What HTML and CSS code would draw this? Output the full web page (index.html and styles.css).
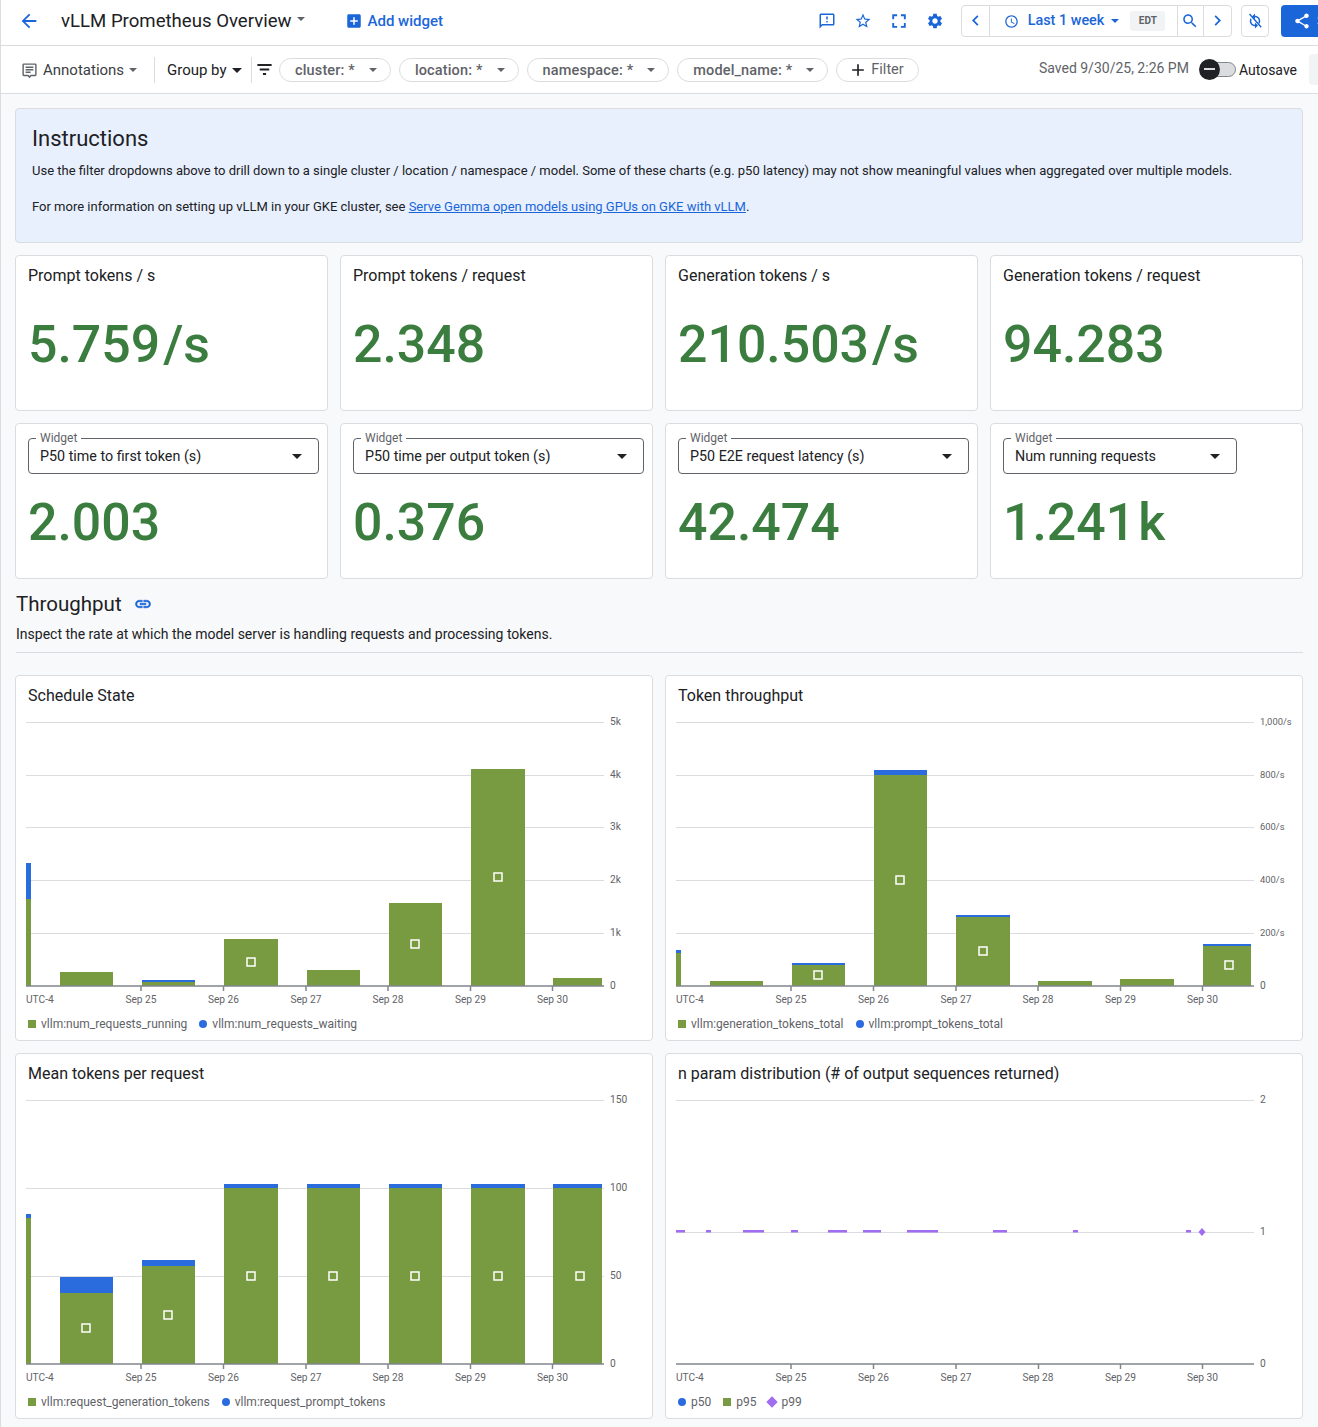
FILE: index.html
```html
<!DOCTYPE html>
<html lang="en">
<head>
  <meta charset="UTF-8" />
  <title>vLLM Prometheus Overview</title>
  <link rel="stylesheet" href="styles.css">
</head>
<body>
  <header class="topbar">
    <svg class="icon back" viewBox="0 0 24 24"><path d="M20 11H7.83l5.59-5.59L12 4l-8 8 8 8 1.41-1.41L7.83 13H20v-2z"/></svg>
    <h1 class="page-title">vLLM Prometheus Overview</h1>
    <span class="caret caret-small title-caret"></span>
    <a class="add-widget">
      <svg class="icon" viewBox="0 0 24 24"><path d="M19 3H5c-1.1 0-2 .9-2 2v14c0 1.100.9 2 2 2h14c1.100 0 2-.9 2-2V5c0-1.100-.9-2-2-2zm-2 10h-4v4h-2v-4H7v-2h4V7h2v4h4v2z"/></svg>
      Add widget
    </a>
    <div class="top-icons">
      <svg class="icon" viewBox="0 0 24 24"><path d="M20 2H4c-1.100 0-2 .9-2 2v18l4-4h14c1.100 0 2-.9 2-2V4c0-1.100-.9-2-2-2zm0 14H5.170L4 17.170V4h16v12zM11 12h2v2h-2zm0-6h2v4h-2z"/></svg>
      <svg class="icon" viewBox="0 0 24 24"><path d="M22 9.240l-7.190-.62L12 2 9.190 8.630 2 9.240l5.460 4.730L5.820 21 12 17.270 18.180 21l-1.630-7.030L22 9.240zM12 15.400l-3.760 2.270 1-4.280-3.320-2.880 4.380-.38L12 6.100l1.710 4.040 4.380.38-3.320 2.880 1 4.280L12 15.400z"/></svg>
      <svg class="icon" viewBox="0 0 24 24"><path d="M5.500 14.500H3V21h6.500v-2.500h-4zM3 9.500h2.500v-4h4V3H3zm15.500 9h-4V21H21v-6.500h-2.500zM14.500 3v2.500h4v4H21V3z"/></svg>
      <svg class="icon" viewBox="0 0 24 24"><path d="M19.140 12.940c.04-.3.06-.61.06-.94 0-.32-.02-.64-.07-.94l2.030-1.580c.18-.14.23-.41.12-.61l-1.920-3.320c-.12-.22-.37-.29-.59-.22l-2.390.96c-.5-.38-1.030-.7-1.620-.94l-.36-2.540c-.04-.24-.24-.41-.48-.41h-3.840c-.24 0-.43.17-.47.41l-.36 2.540c-.59.24-1.130.57-1.620.94l-2.390-.96c-.22-.08-.47 0-.59.22L2.740 8.870c-.12.21-.08.47.12.61l2.030 1.580c-.05.3-.09.63-.09.94s.02.64.07.94l-2.030 1.580c-.18.14-.23.41-.12.61l1.920 3.320c.12.22.37.29.59.22l2.390-.96c.5.38 1.030.7 1.620.94l.36 2.540c.05.24.24.41.48.41h3.840c.24 0 .44-.17.47-.41l.36-2.540c.59-.24 1.130-.56 1.620-.94l2.390.96c.22.08.47 0 .59-.22l1.920-3.320c.12-.22.07-.47-.12-.61l-2.010-1.580zM12 15.600c-1.980 0-3.600-1.620-3.600-3.600s1.620-3.600 3.600-3.600 3.600 1.620 3.600 3.600-1.620 3.600-3.600 3.600z"/></svg>
    </div>
    <div class="time-group">
      <button class="time-btn nav"><svg class="icon" viewBox="0 0 24 24"><path d="M15.410 7.410L14 6l-6 6 6 6 1.410-1.410L10.830 12z"/></svg></button>
      <div class="time-range">
        <svg class="icon clock" viewBox="0 0 24 24"><path d="M11.990 2C6.470 2 2 6.480 2 12s4.470 10 9.990 10C17.520 22 22 17.520 22 12S17.520 2 11.990 2zM12 20c-4.420 0-8-3.580-8-8s3.580-8 8-8 8 3.580 8 8-3.580 8-8 8zm.5-13H11v6l5.250 3.150.75-1.230-4.500-2.670z"/></svg>
        <span>Last 1 week</span>
        <span class="caret caret-blue"></span>
        <span class="tz">EDT</span>
      </div>
      <button class="time-btn zoom-btn"><svg class="icon" viewBox="0 0 24 24"><path d="M15.500 14h-.79l-.28-.27C15.410 12.590 16 11.110 16 9.500 16 5.910 13.090 3 9.500 3S3 5.910 3 9.500 5.910 16 9.500 16c1.610 0 3.090-.59 4.230-1.570l.27.28v.79l5 4.990L20.490 19l-4.990-5zm-6 0C7.010 14 5 11.990 5 9.500S7.010 5 9.500 5 14 7.010 14 9.500 11.990 14 9.500 14z"/></svg></button>
      <button class="time-btn nav"><svg class="icon" viewBox="0 0 24 24"><path d="M10 6L8.590 7.410 13.170 12l-4.580 4.590L10 18l6-6z"/></svg></button>
    </div>
    <button class="refresh-btn">
      <svg class="icon" viewBox="0 0 24 24"><path d="M12 5V2L8 6l4 4V7c2.800 0 5 2.200 5 5 0 .8-.2 1.600-.5 2.200l1.500 1.500c.6-1 1-2.300 1-3.700 0-3.900-3.100-7-7-7zM7.500 9.800L6 8.300C5.400 9.300 5 10.600 5 12c0 3.900 3.100 7 7 7v3l4-4-4-4v3c-2.800 0-5-2.200-5-5 0-.8.2-1.600.5-2.200z"/><path d="M4 3.300L5.400 2 21 19.700 19.600 21z"/></svg>
    </button>
    <button class="share-btn">
      <svg class="icon" viewBox="0 0 24 24"><path d="M18 16.080c-.76 0-1.440.3-1.960.77L8.910 12.700c.05-.23.09-.46.09-.7s-.04-.47-.09-.7l7.050-4.110c.54.5 1.250.81 2.040.81 1.660 0 3-1.340 3-3s-1.340-3-3-3-3 1.340-3 3c0 .24.04.47.09.7L8.040 9.810C7.500 9.310 6.790 9 6 9c-1.660 0-3 1.340-3 3s1.340 3 3 3c.79 0 1.500-.31 2.040-.81l7.120 4.160c-.05.21-.08.43-.08.65 0 1.610 1.310 2.920 2.920 2.920s2.920-1.310 2.920-2.920-1.310-2.920-2.920-2.920z"/></svg>
      Share
    </button>
  </header>

  <div class="toolbar">
    <div class="tool-item annotations">
      <svg class="icon" viewBox="0 0 24 24"><path d="M4 2h16c1.100 0 2 .9 2 2v14c0 1.100-.9 2-2 2h-5.500L12 23l-2.500-3H4c-1.100 0-2-.9-2-2V4c0-1.100.9-2 2-2zm0 2v14h6.400l1.600 1.900 1.600-1.900H20V4H4zm2.500 2.500h11v2h-11v-2zm0 3.500h11v2h-11v-2zm0 3.500h7v2h-7v-2z"/></svg>
      Annotations
      <span class="caret caret-small"></span>
    </div>
    <div class="tool-item group-by">Group by <span class="caret"></span></div>
    <svg class="icon filter-icon" viewBox="0 0 24 24"><path d="M10 19h4v-2.500h-4V19zM3 5v2.500h18V5H3zm3 8.300h12v-2.500H6v2.500z"/></svg>
    <div class="chip">cluster: * <span class="caret caret-small"></span></div>
    <div class="chip">location: * <span class="caret caret-small"></span></div>
    <div class="chip">namespace: * <span class="caret caret-small"></span></div>
    <div class="chip">model_name: * <span class="caret caret-small"></span></div>
    <div class="chip chip-filter">
      <svg class="icon" viewBox="0 0 24 24"><path d="M19 13h-6v6h-2v-6H5v-2h6V5h2v6h6v2z"/></svg>
      Filter
    </div>
    <span class="saved">Saved 9/30/25, 2:26 PM</span>
    <div class="toggle"><span class="knob"></span></div>
    <span class="autosave">Autosave</span>
    <span class="grey-btn"></span>
  </div>

  <main class="content">
    <section class="instructions">
      <h2>Instructions</h2>
      <p>Use the filter dropdowns above to drill down to a single cluster / location / namespace / model. Some of these charts (e.g. p50 latency) may not show meaningful values when aggregated over multiple models.</p>
      <p>For more information on setting up vLLM in your GKE cluster, see <a href="#">Serve Gemma open models using GPUs on GKE with vLLM</a>.</p>
    </section>

    <div class="score-row">
      <div class="card score">
        <div class="card-title">Prompt tokens / s</div>
        <div class="value">5.759<span class="unit">/s</span></div>
      </div>
      <div class="card score">
        <div class="card-title">Prompt tokens / request</div>
        <div class="value">2.348</div>
      </div>
      <div class="card score">
        <div class="card-title">Generation tokens / s</div>
        <div class="value">210.503<span class="unit">/s</span></div>
      </div>
      <div class="card score">
        <div class="card-title">Generation tokens / request</div>
        <div class="value">94.283</div>
      </div>
    </div>

    <div class="score-row">
      <div class="card score picker">
        <div class="select"><label>Widget</label>P50 time to first token (s)<span class="caret"></span></div>
        <div class="value">2.003</div>
      </div>
      <div class="card score picker">
        <div class="select"><label>Widget</label>P50 time per output token (s)<span class="caret"></span></div>
        <div class="value">0.376</div>
      </div>
      <div class="card score picker">
        <div class="select"><label>Widget</label>P50 E2E request latency (s)<span class="caret"></span></div>
        <div class="value">42.474</div>
      </div>
      <div class="card score picker">
        <div class="select select-short"><label>Widget</label>Num running requests<span class="caret"></span></div>
        <div class="value">1.241<span class="unit">k</span></div>
      </div>
    </div>

    <h2 class="section-title">Throughput
      <svg class="icon" viewBox="0 0 24 24"><path d="M3.900 12c0-1.710 1.390-3.100 3.100-3.100h4V7H7c-2.760 0-5 2.240-5 5s2.240 5 5 5h4v-1.900H7c-1.710 0-3.100-1.390-3.100-3.100zM8 13h8v-2H8v2zm9-6h-4v1.900h4c1.710 0 3.100 1.390 3.100 3.100s-1.390 3.100-3.100 3.100h-4V17h4c2.760 0 5-2.240 5-5s-2.240-5-5-5z"/></svg>
    </h2>
    <p class="section-desc">Inspect the rate at which the model server is handling requests and processing tokens.</p>
    <hr class="section-rule">

    <div class="chart-grid">
      <div class="card chart">
        <div class="card-title">Schedule State</div>
        <svg class="plot" viewBox="0 0 636 300">
          <line class="grid" x1="10" x2="588" y1="10" y2="10"/><line class="grid" x1="10" x2="588" y1="63" y2="63"/>
          <line class="grid" x1="10" x2="588" y1="115" y2="115"/><line class="grid" x1="10" x2="588" y1="168" y2="168"/>
          <line class="grid" x1="10" x2="588" y1="221" y2="221"/>
          <text class="tick" x="594" y="13">5k</text><text class="tick" x="594" y="66">4k</text><text class="tick" x="594" y="118">3k</text>
          <text class="tick" x="594" y="171">2k</text><text class="tick" x="594" y="224">1k</text><text class="tick" x="594" y="277">0</text>
          <rect class="blue" x="10" y="151" width="5" height="36"/><rect class="green" x="10" y="187" width="5" height="87"/>
          <rect class="green" x="44" y="260" width="53" height="14"/>
          <rect class="blue" x="126" y="268" width="53" height="2"/><rect class="green" x="126" y="270" width="53" height="4"/>
          <rect class="green" x="208" y="227" width="54" height="47"/>
          <rect class="green" x="291" y="258" width="53" height="16"/>
          <rect class="green" x="373" y="191" width="53" height="83"/>
          <rect class="green" x="455" y="57" width="54" height="217"/>
          <rect class="green" x="537" y="266" width="49" height="8"/>
          <rect class="marker" x="231" y="246" width="8" height="8"/><rect class="marker" x="395" y="228" width="8" height="8"/><rect class="marker" x="478" y="161" width="8" height="8"/>
          <line class="axis" x1="10" x2="588" y1="274" y2="274"/>
          <path class="axis" d="M125 274v5M207.500 274v5M290 274v5M372 274v5M454.500 274v5M536.500 274v5"/>
          <text class="tick" x="10" y="291">UTC-4</text><text class="tick mid" x="125" y="291">Sep 25</text><text class="tick mid" x="207.500" y="291">Sep 26</text>
          <text class="tick mid" x="290" y="291">Sep 27</text><text class="tick mid" x="372" y="291">Sep 28</text><text class="tick mid" x="454.500" y="291">Sep 29</text><text class="tick mid" x="536.500" y="291">Sep 30</text>
        </svg>
        <div class="legend">
          <span class="key"><i class="swatch sq"></i>vllm:num_requests_running</span>
          <span class="key"><i class="swatch dot"></i>vllm:num_requests_waiting</span>
        </div>
      </div>

      <div class="card chart">
        <div class="card-title">Token throughput</div>
        <svg class="plot" viewBox="0 0 636 300">
          <line class="grid" x1="10" x2="588" y1="10" y2="10"/><line class="grid" x1="10" x2="588" y1="63" y2="63"/>
          <line class="grid" x1="10" x2="588" y1="115" y2="115"/><line class="grid" x1="10" x2="588" y1="168" y2="168"/>
          <line class="grid" x1="10" x2="588" y1="221" y2="221"/>
          <text class="tick rate" x="594" y="13">1,000/s</text><text class="tick rate" x="594" y="66">800/s</text><text class="tick rate" x="594" y="118">600/s</text>
          <text class="tick rate" x="594" y="171">400/s</text><text class="tick rate" x="594" y="224">200/s</text><text class="tick" x="594" y="277">0</text>
          <rect class="blue" x="10" y="238" width="5" height="3"/><rect class="green" x="10" y="241" width="5" height="33"/>
          <rect class="green" x="44" y="269" width="53" height="5"/>
          <rect class="blue" x="126" y="251" width="53" height="2"/><rect class="green" x="126" y="253" width="53" height="21"/>
          <rect class="blue" x="208" y="58" width="53" height="5"/><rect class="green" x="208" y="63" width="53" height="211"/>
          <rect class="blue" x="290" y="203" width="54" height="2"/><rect class="green" x="290" y="205" width="54" height="69"/>
          <rect class="green" x="372" y="269" width="54" height="5"/>
          <rect class="green" x="454" y="267" width="54" height="7"/>
          <rect class="blue" x="537" y="232" width="48" height="2"/><rect class="green" x="537" y="234" width="48" height="40"/>
          <rect class="marker" x="148" y="259" width="8" height="8"/><rect class="marker" x="230" y="164" width="8" height="8"/><rect class="marker" x="313" y="235" width="8" height="8"/><rect class="marker" x="559" y="249" width="8" height="8"/>
          <line class="axis" x1="10" x2="588" y1="274" y2="274"/>
          <path class="axis" d="M125 274v5M207.500 274v5M290 274v5M372 274v5M454.500 274v5M536.500 274v5"/>
          <text class="tick" x="10" y="291">UTC-4</text><text class="tick mid" x="125" y="291">Sep 25</text><text class="tick mid" x="207.500" y="291">Sep 26</text>
          <text class="tick mid" x="290" y="291">Sep 27</text><text class="tick mid" x="372" y="291">Sep 28</text><text class="tick mid" x="454.500" y="291">Sep 29</text><text class="tick mid" x="536.500" y="291">Sep 30</text>
        </svg>
        <div class="legend">
          <span class="key"><i class="swatch sq"></i>vllm:generation_tokens_total</span>
          <span class="key"><i class="swatch dot"></i>vllm:prompt_tokens_total</span>
        </div>
      </div>

      <div class="card chart">
        <div class="card-title">Mean tokens per request</div>
        <svg class="plot" viewBox="0 0 636 300">
          <line class="grid" x1="10" x2="588" y1="10" y2="10"/><line class="grid" x1="10" x2="588" y1="98" y2="98"/><line class="grid" x1="10" x2="588" y1="186" y2="186"/>
          <text class="tick" x="594" y="13">150</text><text class="tick" x="594" y="101">100</text><text class="tick" x="594" y="189">50</text><text class="tick" x="594" y="277">0</text>
          <rect class="blue" x="10" y="124" width="5" height="4"/><rect class="green" x="10" y="128" width="5" height="146"/>
          <rect class="blue" x="44" y="187" width="53" height="16"/><rect class="green" x="44" y="203" width="53" height="71"/>
          <rect class="blue" x="126" y="170" width="53" height="6"/><rect class="green" x="126" y="176" width="53" height="98"/>
          <rect class="blue" x="208" y="94" width="54" height="4"/><rect class="green" x="208" y="98" width="54" height="176"/>
          <rect class="blue" x="291" y="94" width="53" height="4"/><rect class="green" x="291" y="98" width="53" height="176"/>
          <rect class="blue" x="373" y="94" width="53" height="4"/><rect class="green" x="373" y="98" width="53" height="176"/>
          <rect class="blue" x="455" y="94" width="54" height="4"/><rect class="green" x="455" y="98" width="54" height="176"/>
          <rect class="blue" x="537" y="94" width="49" height="4"/><rect class="green" x="537" y="98" width="49" height="176"/>
          <rect class="marker" x="66" y="234" width="8" height="8"/><rect class="marker" x="148" y="221" width="8" height="8"/><rect class="marker" x="231" y="182" width="8" height="8"/><rect class="marker" x="313" y="182" width="8" height="8"/>
          <rect class="marker" x="395" y="182" width="8" height="8"/><rect class="marker" x="478" y="182" width="8" height="8"/><rect class="marker" x="560" y="182" width="8" height="8"/>
          <line class="axis" x1="10" x2="588" y1="274" y2="274"/>
          <path class="axis" d="M125 274v5M207.500 274v5M290 274v5M372 274v5M454.500 274v5M536.500 274v5"/>
          <text class="tick" x="10" y="291">UTC-4</text><text class="tick mid" x="125" y="291">Sep 25</text><text class="tick mid" x="207.500" y="291">Sep 26</text>
          <text class="tick mid" x="290" y="291">Sep 27</text><text class="tick mid" x="372" y="291">Sep 28</text><text class="tick mid" x="454.500" y="291">Sep 29</text><text class="tick mid" x="536.500" y="291">Sep 30</text>
        </svg>
        <div class="legend">
          <span class="key"><i class="swatch sq"></i>vllm:request_generation_tokens</span>
          <span class="key"><i class="swatch dot"></i>vllm:request_prompt_tokens</span>
        </div>
      </div>

      <div class="card chart">
        <div class="card-title">n param distribution (# of output sequences returned)</div>
        <svg class="plot" viewBox="0 0 636 300">
          <line class="grid" x1="10" x2="588" y1="10" y2="10"/><line class="grid" x1="10" x2="588" y1="142" y2="142"/>
          <text class="tick" x="594" y="13">2</text><text class="tick" x="594" y="145">1</text><text class="tick" x="594" y="277">0</text>
          <rect class="purple" x="10" y="140" width="9" height="2.500"/><rect class="purple" x="40" y="140" width="5" height="2.500"/><rect class="purple" x="77" y="140" width="21" height="2.500"/>
          <rect class="purple" x="125" y="140" width="7" height="2.500"/><rect class="purple" x="162" y="140" width="19" height="2.500"/><rect class="purple" x="197" y="140" width="18" height="2.500"/>
          <rect class="purple" x="241" y="140" width="31" height="2.500"/><rect class="purple" x="327" y="140" width="14" height="2.500"/><rect class="purple" x="407" y="140" width="5" height="2.500"/>
          <rect class="purple" x="520" y="140" width="5" height="2.500"/>
          <path class="purple" d="M536 138l3.500 4-3.500 4-3.500-4z"/>
          <line class="axis" x1="10" x2="588" y1="274" y2="274"/>
          <path class="axis" d="M125 274v5M207.500 274v5M290 274v5M372.500 274v5M454.500 274v5M536.500 274v5"/>
          <text class="tick" x="10" y="291">UTC-4</text><text class="tick mid" x="125" y="291">Sep 25</text><text class="tick mid" x="207.500" y="291">Sep 26</text>
          <text class="tick mid" x="290" y="291">Sep 27</text><text class="tick mid" x="372" y="291">Sep 28</text><text class="tick mid" x="454.500" y="291">Sep 29</text><text class="tick mid" x="536.500" y="291">Sep 30</text>
        </svg>
        <div class="legend">
          <span class="key"><i class="swatch dot"></i>p50</span>
          <span class="key"><i class="swatch sq"></i>p95</span>
          <span class="key"><i class="swatch diamond"></i>p99</span>
        </div>
      </div>
    </div>
  </main>
</body>
</html>
```
FILE: styles.css
```css
* {
  box-sizing: border-box;
}
html, body {
  overflow-x: hidden;
}
body {
  margin: 0;
  font-family: Roboto, "Liberation Sans", sans-serif;
  font-size: 14px;
  color: #202124;
  background: #f8f9fa;
  border-left: 1px solid #dadce0;
}
h1, h2, p {
  margin: 0;
  font-weight: 400;
}
button {
  font: inherit;
  border: 0;
  background: none;
  padding: 0;
}
.icon {
  display: block;
  width: 18px;
  height: 18px;
  fill: #1a66d9;
  flex-shrink: 0;
}

/* carets */
.caret {
  display: inline-block;
  width: 0;
  height: 0;
  border-left: 5px solid transparent;
  border-right: 5px solid transparent;
  border-top: 5px solid #202124;
}
.caret-small {
  border-left-width: 4px;
  border-right-width: 4px;
  border-top-width: 4px;
  border-top-color: #5f6368;
}
.caret-blue {
  border-left-width: 4px;
  border-right-width: 4px;
  border-top-width: 4px;
  border-top-color: #1a66d9;
}

/* top bar */
.topbar {
  height: 46px;
  display: flex;
  align-items: center;
  background: #fff;
  border-bottom: 1px solid #dadce0;
  padding: 0 0 4px 17px;
}
.back {
  width: 22px;
  height: 22px;
}
.page-title {
  font-size: 18.600px;
  margin-left: 21px;
  color: #202124;
}
.title-caret {
  margin-left: 5px;
  margin-top: -4px;
}
.add-widget {
  display: flex;
  align-items: center;
  gap: 5px;
  margin-left: 40px;
  font-size: 15px;
  font-weight: 500;
  color: #1a66d9;
}
.top-icons {
  display: flex;
  gap: 18px;
  margin-left: auto;
}
.time-group {
  display: flex;
  align-items: stretch;
  width: 271px;
  height: 32px;
  margin-left: 17px;
  background: #fff;
  border: 1px solid #dadce0;
  border-radius: 4px;
}
.time-btn {
  width: 27px;
  display: flex;
  align-items: center;
  justify-content: center;
}
.time-btn .icon {
  width: 18px;
  height: 18px;
}
.time-btn.nav .icon {
  width: 21px;
  height: 21px;
}
.zoom-btn {
  border-right: 1px solid #dadce0;
}
.time-range {
  width: 189px;
  flex-shrink: 0;
  display: flex;
  align-items: center;
  padding-left: 14px;
  border-left: 1px solid #dadce0;
  border-right: 1px solid #dadce0;
  font-size: 14.400px;
  font-weight: 500;
  color: #1a66d9;
}
.clock {
  width: 15px;
  height: 15px;
  margin-right: 9px;
  margin-top: 2px;
}
.time-range .caret {
  margin-left: 7px;
}
.tz {
  margin-left: 11px;
  width: 35px;
  text-align: center;
  line-height: 20px;
  font-size: 10px;
  font-weight: 700;
  color: #5f6368;
  background: #f1f3f4;
  border-radius: 3px;
}
.refresh-btn {
  width: 28px;
  height: 32px;
  margin-left: 9px;
  display: flex;
  align-items: center;
  justify-content: center;
  background: #fff;
  border: 1px solid #dadce0;
  border-radius: 4px;
}
.share-btn {
  width: 37px;
  height: 32px;
  margin-left: 12px;
  padding-left: 12px;
  display: flex;
  align-items: center;
  gap: 6px;
  overflow: hidden;
  white-space: nowrap;
  font-weight: 500;
  color: #fff;
  background: #1a66d9;
  border-radius: 4px 0 0 4px;
}
.share-btn .icon {
  fill: #fff;
}

/* filter bar */
.toolbar {
  height: 48px;
  display: flex;
  align-items: center;
  background: #fff;
  border-bottom: 1px solid #dadce0;
  padding-left: 20px;
}
.tool-item {
  display: flex;
  align-items: center;
  height: 26px;
  padding-top: 1px;
  font-size: 15px;
  color: #3c4043;
}
.annotations {
  width: 134px;
  gap: 5px;
  border-right: 1px solid #dadce0;
}
.annotations .icon {
  width: 17px;
  height: 17px;
  fill: #5f6368;
}
.group-by {
  width: 97px;
  gap: 5px;
  padding-left: 12px;
  border-right: 1px solid #dadce0;
  color: #202124;
}
.filter-icon {
  width: 19px;
  height: 19px;
  margin-left: 3px;
  fill: #202124;
}
.chip {
  display: flex;
  align-items: center;
  justify-content: space-between;
  height: 24px;
  margin-left: 8px;
  padding: 1px 13px 0 15px;
  gap: 14px;
  font-size: 14.500px;
  font-weight: 500;
  letter-spacing: .15px;
  color: #5f6368;
  background: #fff;
  border: 1px solid #dadce0;
  border-radius: 12px;
  white-space: nowrap;
}
.chip:nth-of-type(3) {
  margin-left: 5px;
}
.chip-filter {
  gap: 3px;
  padding: 0 14px 0 11px;
  font-weight: 400;
  letter-spacing: 0;
}
.chip-filter .icon {
  width: 20px;
  height: 20px;
  fill: #202124;
}
.saved {
  margin-left: auto;
  margin-top: -4px;
  width: 149px;
  white-space: nowrap;
  color: #5f6368;
}
.toggle {
  position: relative;
  width: 36px;
  height: 15px;
  margin-left: 12px;
  background: #dadce0;
  border: 1px solid #80868b;
  border-radius: 8px;
}
.knob {
  position: absolute;
  left: -2px;
  top: -4px;
  width: 21px;
  height: 21px;
  background: #202124;
  border-radius: 50%;
}
.knob::after {
  content: "";
  position: absolute;
  left: 5px;
  top: 9px;
  width: 11px;
  height: 2px;
  background: #dadce0;
}
.autosave {
  margin-left: 3px;
  font-size: 14px;
  color: #202124;
}
.grey-btn {
  width: 9px;
  height: 31px;
  margin-left: 12px;
  background: #f1f3f4;
  border-radius: 4px 0 0 4px;
}

/* dashboard */
.content {
  padding: 14px 15px 8px 14px;
}
.card {
  background: #fff;
  border: 1px solid #dadce0;
  border-radius: 4px;
}
.instructions {
  height: 135px;
  padding: 16px 16px 0;
  background: #e8f0fe;
  border: 1px solid #dadce0;
  border-radius: 4px;
}
.instructions h2 {
  font-size: 22px;
  line-height: 28px;
  margin-bottom: 9px;
}
.instructions p {
  font-size: 13px;
  line-height: 18px;
  margin-bottom: 18px;
}
.instructions a {
  color: #1a66d9;
}
.score-row {
  display: grid;
  grid-template-columns: repeat(4, 1fr);
  gap: 12px;
  margin-top: 12px;
}
.score {
  height: 156px;
  padding: 10px 12px 0;
}
.card-title {
  font-size: 16px;
  line-height: 20px;
}
.value {
  margin-top: 29px;
  font-size: 51.800px;
  line-height: 60px;
  font-weight: 500;
  color: #3a7d3f;
  white-space: nowrap;
}
.unit {
  margin-left: 3px;
}
.picker {
  padding: 14px 8px 0 12px;
}
.picker .value {
  margin-top: 19px;
}
.select {
  position: relative;
  display: flex;
  align-items: center;
  justify-content: space-between;
  height: 36px;
  padding: 0 16px 0 11px;
  font-size: 14.300px;
  border: 1px solid #5f6368;
  border-radius: 4px;
}
.select-short {
  width: 234px;
}
.select label {
  position: absolute;
  left: 7px;
  top: -7px;
  padding: 0 4px;
  font-size: 12px;
  line-height: 13px;
  color: #5f6368;
  background: #fff;
}
.section-title {
  display: flex;
  align-items: center;
  gap: 12px;
  margin: 11px 0 0 1px;
  font-size: 20.500px;
  line-height: 28px;
}
.section-title .icon {
  stroke: #1a66d9;
  stroke-width: .8;
}
.section-desc {
  margin: 7px 0 0 1px;
  font-size: 14px;
  line-height: 18px;
}
.section-rule {
  margin: 9px 0 22px 1px;
  border: 0;
  border-top: 1px solid #dadce0;
}
.chart-grid {
  display: grid;
  grid-template-columns: repeat(2, 1fr);
  gap: 12px;
}
.chart {
  height: 366px;
  padding-top: 10px;
}
.chart .card-title {
  padding-left: 12px;
}
.plot {
  display: block;
  width: 636px;
  height: 300px;
  margin-top: 6px;
}
.grid {
  stroke: #dadce0;
  stroke-width: 1;
  shape-rendering: crispEdges;
}
.axis {
  stroke: #80868b;
  stroke-width: 1.500;
  fill: none;
}
.green {
  fill: #789b41;
}
.blue {
  fill: #2a6bde;
}
.purple {
  fill: #a06cf0;
}
.marker {
  fill: none;
  stroke: #fff;
  stroke-width: 1.500;
}
.tick {
  font-size: 10.200px;
  fill: #5f6368;
}
.rate {
  font-size: 9.400px;
}
.mid {
  text-anchor: middle;
}
.legend {
  display: flex;
  gap: 12px;
  margin-top: 4px;
  padding-left: 12px;
  font-size: 12px;
  line-height: 16px;
  color: #5f6368;
}
.key {
  display: flex;
  align-items: center;
  gap: 5px;
}
.swatch {
  width: 8px;
  height: 8px;
  background: #789b41;
}
.dot {
  background: #2a6bde;
  border-radius: 50%;
}
.diamond {
  background: #a06cf0;
  transform: rotate(45deg);
}
```
